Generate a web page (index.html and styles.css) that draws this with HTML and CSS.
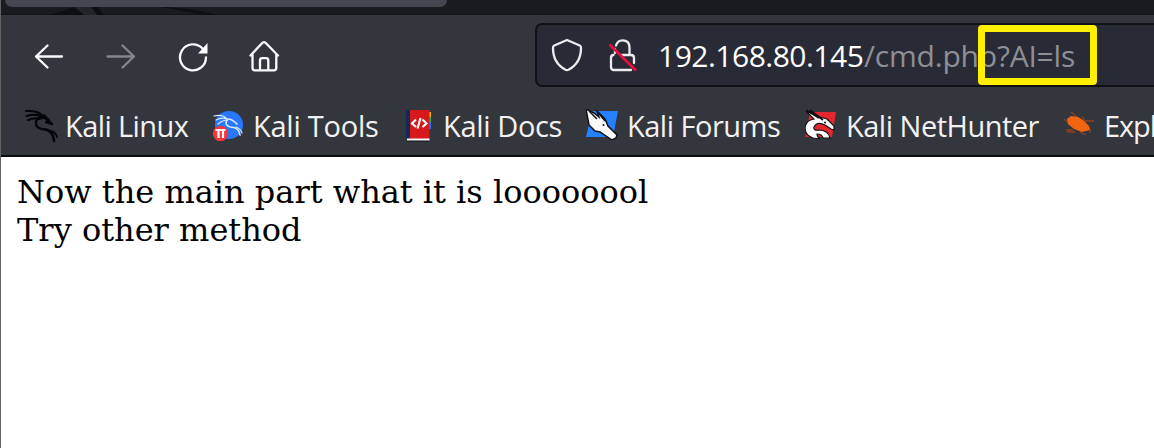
FILE: index.html
```
<!DOCTYPE html>
<html lang="en">
<head>
<meta charset="utf-8">
<title>Browser</title>
<link rel="stylesheet" href="styles.css">
</head>
<body>
<div class="window">
  <div class="tabstrip">
    <svg class="wallpaper" width="230" height="15" viewBox="0 0 230 15"><path d="M50 15L74 7L84 15ZM91 7L98 7L104 15L97 15ZM160 7Q195 8 217 15L203 15Q180 10 160 7Z" fill="#0d0e11"/><path d="M75 7H91L97 15H84Z" fill="#22242a"/></svg>
    <div class="tab"></div>
  </div>
  <div class="toolbar">
    <div class="nav">
      <svg class="icon" width="32" height="32" viewBox="0 0 32 32"><path d="M29 16.500H3M14.500 5.500L3 16.500L14.500 27.500" /></svg>
      <svg class="icon dim" width="32" height="32" viewBox="0 0 32 32"><path d="M2.500 16.500H29M17.500 5.500L29 16.500L17.500 27.500" /></svg>
      <svg class="icon" width="32" height="32" viewBox="0 0 32 32"><path d="M25.500 8.500A13 13 0 1 0 29 17.500" /><path d="M30.500 3V13.500H21Z" fill="#fbfbfe" stroke="none"/></svg>
      <svg class="icon" width="32" height="32" viewBox="0 0 32 32"><path d="M1.500 15.500L13.500 2.800Q15 1.500 16.500 2.800L29 15.500M3.500 14V28Q3.500 30.300 5.800 30.300H25Q27.300 30.300 27.300 28V14M11 30V20.500Q11 18.200 13.300 18.200H17Q19.300 18.200 19.300 20.500V30" /></svg>
    </div>
    <div class="urlbar">
      <svg class="icon shield" width="32" height="34" viewBox="0 0 32 34"><path d="M16 2L28.700 7.500Q30.200 8.200 30 10Q30 25 17.500 31.800Q16 32.500 14.500 31.800Q2 25 2 10Q1.800 8.200 3.300 7.500Z" /></svg>
      <svg class="icon lock" width="32" height="34" viewBox="0 0 32 34"><path d="M9 7.500Q10.500 2.300 15.500 2.300Q22.500 2.300 22.500 9.500V17M15 17H24Q27 17 27 20V25M6.500 17Q4 17 4 20V29Q4 32 7 32H24M8 11V15" /><path d="M2.500 6.500L29 32.500" class="slash"/></svg>
      <span class="url"><span class="host">192.168.80.145</span><span class="path">/cmd.php?AI=ls</span></span>
      <div class="highlight"></div>
    </div>
  </div>
  <div class="bookmarks">
    <div class="bookmark b1">
      <svg width="34" height="34" viewBox="0 0 34 34"><g fill="none" stroke="#050607" stroke-linecap="round" stroke-linejoin="round"><path d="M2 2Q14 1 20 8M2.500 7Q12 4 18 8M4 11Q11 8 16 10" stroke-width="2"/><path d="M17 8Q12 9 12 14Q12 19 18 20Q29 20 30 32" stroke-width="2.400"/><path d="M17 9Q22 8 28 15L22 13" stroke-width="2.400"/><path d="M20 6L25 11M26 22Q32 23 33 28" stroke-width="1.800"/></g></svg>
      <span>Kali Linux</span>
    </div>
    <div class="bookmark b2">
      <svg width="34" height="34" viewBox="0 0 34 34"><circle cx="17" cy="16" r="14" fill="#2877ff"/><g fill="none" stroke="#dbeaff" stroke-linecap="round"><path d="M2 7Q11 5 15 10M4 11Q10 8 15 10M6 15Q11 11 15 11" stroke-width="1.200"/><path d="M15 11Q12 16 18 18Q27 18 28 26M16 10Q20 10 25 15" stroke-width="1.700"/><path d="M24 18Q29 20 30 24" stroke-width="1.200"/></g><circle cx="8.500" cy="24.500" r="7.700" fill="#f53537"/><path d="M3.500 21H13.500" stroke="#fff" stroke-width="1.800"/><path d="M6.500 20V29M11 20V29" stroke="#fff" stroke-width="2.200"/></svg>
      <span>Kali Tools</span>
    </div>
    <div class="bookmark b3">
      <svg width="34" height="34" viewBox="0 0 34 34"><path d="M26 3H29V8H26Z" fill="#f5b400"/><path d="M26 8H29V13H26Z" fill="#38b34a"/><path d="M26 13H29V20H26Z" fill="#2877ff"/><path d="M4 1H27.500V30H4Z" fill="#d7191c"/><path d="M4 1H8V30H4Z" fill="#102a58"/><path d="M5 29.500H27.500V32H5Z" fill="#f6f5f5"/><path d="M5 31.500H27.500V32.500H5Z" fill="#111"/><path d="M14 10.500L10 14.500L14 18M20.500 10.500L24.500 14.500L20.500 18M18.500 9L15.500 19.500" fill="none" stroke="#fff" stroke-width="2.100"/></svg>
      <span>Kali Docs</span>
    </div>
    <div class="bookmark b4">
      <svg width="34" height="34" viewBox="0 0 34 34"><path d="M6 2H32L27 28H0Z" fill="#2380ff"/><path d="M0 0L8 4L13 8L11 2L19 10L22 17L31 26L30 29L26 31L14 23L9 22L3 16Z" fill="#fafafa" stroke="#101216" stroke-width="1.500"/><path d="M3 2L11 10M10 1L19 12" stroke="#101216" stroke-width="1.500"/><circle cx="17.500" cy="16" r="1" fill="#111"/></svg>
      <span>Kali Forums</span>
    </div>
    <div class="bookmark b5">
      <svg width="34" height="34" viewBox="0 0 34 34"><path d="M5 3H31L27 28H0Z" fill="#e5262d"/><path d="M8 29Q0 26 0 19Q1 11 9 10L1 2L15 8L22 10L29 17L29 21L26 20L20 16Q12 12 9 18Q8 22 14 21Q23 21 25 29H18Q17 25 12 25Q12 28 15 30Z" fill="#fff" stroke="#121216" stroke-width="1.200"/><path d="M1 1L14 9M5 1L18 11" stroke="#111" stroke-width="1.800"/><circle cx="20" cy="13.500" r="1" fill="#111"/></svg>
      <span>Kali NetHunter</span>
    </div>
    <div class="bookmark b6">
      <svg width="34" height="34" viewBox="0 0 34 34"><path d="M1 10L6 14M8 3L14 8M19 7L22 12M22 12H31M3 21H10M12 23H4M17 23L23 26M27 20V24" stroke="#8e421f" stroke-width="1.300"/><path d="M4 10L8 7L15 8L20 11L26 17L27 21L19 23L11 20L5 15Z" fill="#f06412"/></svg>
      <span>Expl</span>
    </div>
  </div>
  <div class="page">Now the main part what it is loooooool<br>Try other method</div>
</div>
</body>
</html>
```
FILE: styles.css
```
* { box-sizing: border-box; }
body { margin: 0; overflow: hidden; background: #fff; }
.window {
  width: 1154px;
  height: 448px;
  overflow: hidden;
  display: flex;
  flex-direction: column;
  border-left: 1px solid #626262;
}
.tabstrip { position: relative; flex: 0 0 15px; background: #1a1b1f; border-bottom: 1px solid #131417; }
.wallpaper { position: absolute; left: -1px; top: 0; }
.tab {
  position: relative;
  width: 442px;
  height: 7px;
  margin-left: 4px;
  background: #44474f;
  border-radius: 0 0 7px 7px;
}
.toolbar {
  flex: 0 0 82px;
  display: flex;
  align-items: center;
  background: #34363e;
  padding-left: 32px;
}
.nav { width: 502px; display: flex; gap: 40px; }
.icon { flex: none; fill: none; stroke: #fbfbfe; stroke-width: 2.3; stroke-linecap: round; stroke-linejoin: round; }
.dim { stroke: #85868a; }
.shield, .lock { stroke: #ececef; }
.urlbar {
  position: relative;
  flex: 1;
  height: 64px;
  margin-bottom: 2px;
  display: flex;
  align-items: center;
  background: #282a35;
  border: 2px solid #101115;
  border-right: 0;
  border-radius: 7px 0 0 7px;
  padding-left: 14px;
}
.lock { margin-left: 24px; }
.slash { stroke: #e6103f; stroke-width: 2.8; stroke-linecap: butt; }
.url { margin-left: 19px; padding-top: 2px; font: 30px/40px "Open Sans", sans-serif; white-space: nowrap; }
.host { color: #fff; display: inline-block; width: 206px; letter-spacing: -0.5px; }
.path { color: #8e8f95; letter-spacing: -0.2px; }
.highlight {
  position: absolute;
  left: 441px;
  top: 0;
  width: 119px;
  height: 60px;
  border: 7px solid #fff000;
  border-radius: 4px;
}
.bookmarks {
  flex: 0 0 60px;
  display: flex;
  background: #34363e;
  border-bottom: 2px solid #0c0c0f;
  padding-left: 23px;
}
.bookmark {
  flex: none;
  display: flex;
  align-items: center;
  gap: 7px;
  color: #f2f1f0;
  font: 29px/40px "Open Sans", sans-serif;
  white-space: nowrap;
}
.bookmark svg { flex: none; }
.b1 { width: 188px; letter-spacing: -0.6px; }
.b2 { width: 190px; letter-spacing: -0.25px; }
.b3 { width: 184px; letter-spacing: -0.35px; }
.b4 { width: 219px; letter-spacing: -0.5px; }
.b5 { width: 258px; letter-spacing: -0.5px; }
.b6 { letter-spacing: -1.1px; }
.page { flex: 1; background: #fff; color: #000; padding: 16px; font: 32px/38px "DejaVu Serif", serif; }
```
